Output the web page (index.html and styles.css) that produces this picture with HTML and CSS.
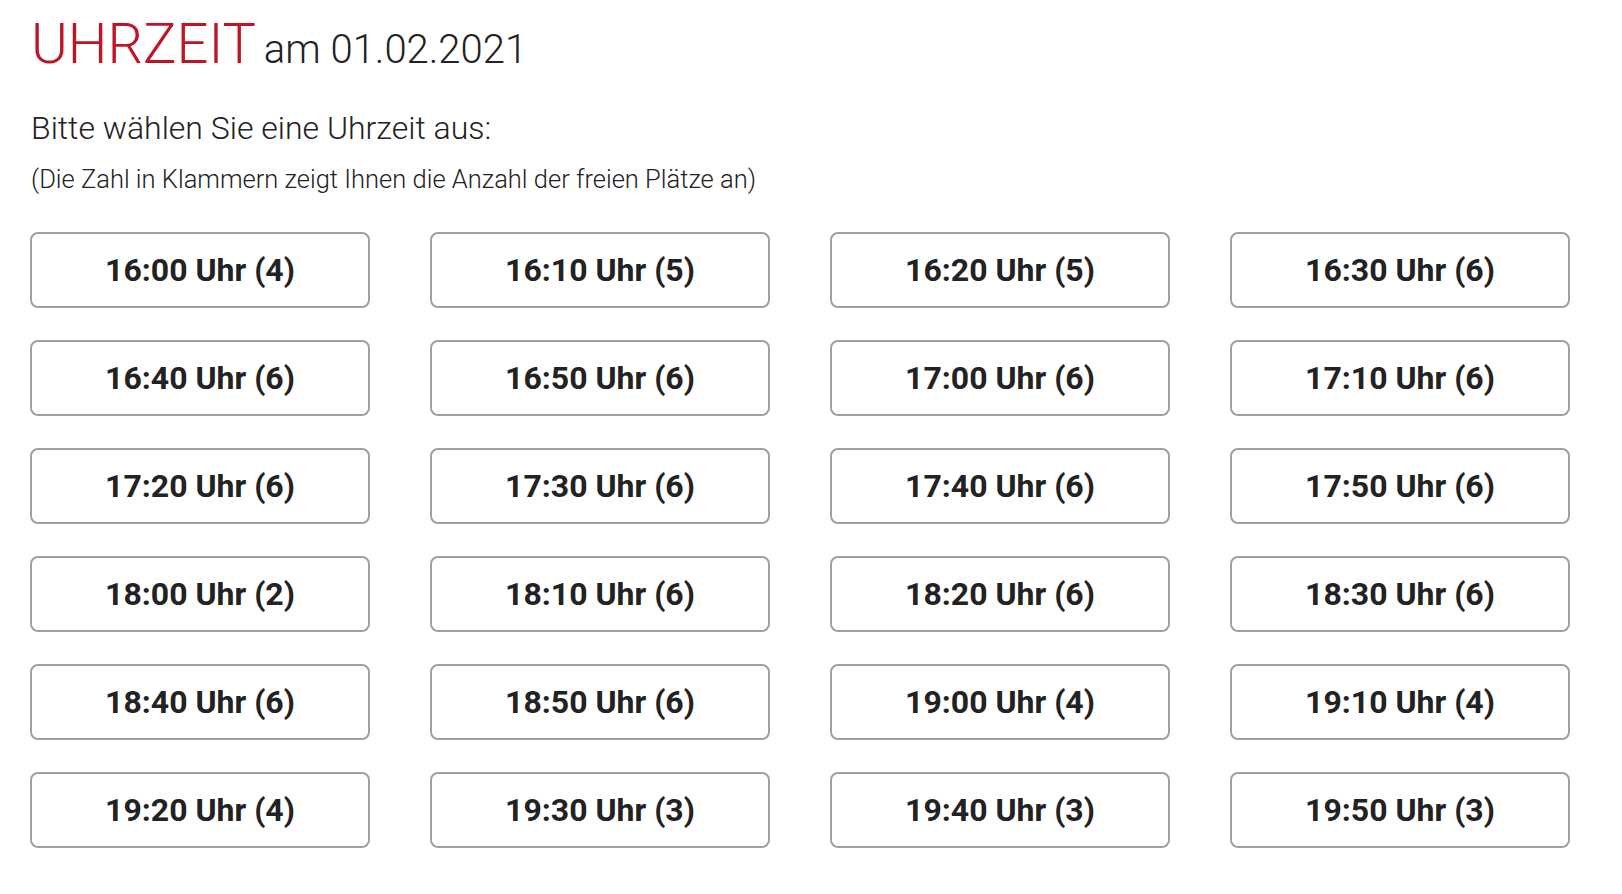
FILE: index.html
```html
<!DOCTYPE html>
<html lang="de">
<head>
<meta charset="utf-8">
<title>Uhrzeit</title>
<link rel="stylesheet" href="styles.css">
</head>
<body>
<main class="page">
  <h1 class="title"><span class="title-main">UHRZEIT</span> <span class="title-date">am 01.02.2021</span></h1>
  <p class="lead">Bitte wählen Sie eine Uhrzeit aus:</p>
  <p class="hint">(Die Zahl in Klammern zeigt Ihnen die Anzahl der freien Plätze an)</p>
  <div class="slots">
    <button class="slot">16:00 Uhr (4)</button>
    <button class="slot">16:10 Uhr (5)</button>
    <button class="slot">16:20 Uhr (5)</button>
    <button class="slot">16:30 Uhr (6)</button>
    <button class="slot">16:40 Uhr (6)</button>
    <button class="slot">16:50 Uhr (6)</button>
    <button class="slot">17:00 Uhr (6)</button>
    <button class="slot">17:10 Uhr (6)</button>
    <button class="slot">17:20 Uhr (6)</button>
    <button class="slot">17:30 Uhr (6)</button>
    <button class="slot">17:40 Uhr (6)</button>
    <button class="slot">17:50 Uhr (6)</button>
    <button class="slot">18:00 Uhr (2)</button>
    <button class="slot">18:10 Uhr (6)</button>
    <button class="slot">18:20 Uhr (6)</button>
    <button class="slot">18:30 Uhr (6)</button>
    <button class="slot">18:40 Uhr (6)</button>
    <button class="slot">18:50 Uhr (6)</button>
    <button class="slot">19:00 Uhr (4)</button>
    <button class="slot">19:10 Uhr (4)</button>
    <button class="slot">19:20 Uhr (4)</button>
    <button class="slot">19:30 Uhr (3)</button>
    <button class="slot">19:40 Uhr (3)</button>
    <button class="slot">19:50 Uhr (3)</button>
  </div>
</main>
</body>
</html>
```
FILE: styles.css
```css
html, body {
  margin: 0;
  padding: 0;
  background: #fff;
}
body {
  font-family: Roboto, "Liberation Sans", sans-serif;
  color: #222;
}
.page {
  padding: 12px 52px 0 30px;
}
.title {
  margin: 0 0 0 1px;
  font-weight: 300;
  line-height: 64px;
  white-space: nowrap;
}
.title-main {
  font-size: 56px;
  color: #c01424;
}
.title-date {
  font-size: 40px;
  color: #222;
}
.lead {
  margin: 24px 0 0 1px;
  font-size: 32px;
  font-weight: 300;
  line-height: 40px;
}
.hint {
  margin: 15px 0 0 1px;
  font-size: 25.5px;
  font-weight: 300;
  line-height: 32px;
}
.slots {
  margin-top: 37px;
  display: grid;
  grid-template-columns: repeat(4, 340px);
  column-gap: 60px;
  row-gap: 32px;
}
.slot {
  height: 76px;
  box-sizing: border-box;
  border: 2px solid #a0a0a0;
  border-radius: 8px;
  background: #fff;
  font-family: Roboto, "Liberation Sans", sans-serif;
  font-size: 32px;
  font-weight: 700;
  color: #222;
  padding: 0;
  cursor: pointer;
}
```
